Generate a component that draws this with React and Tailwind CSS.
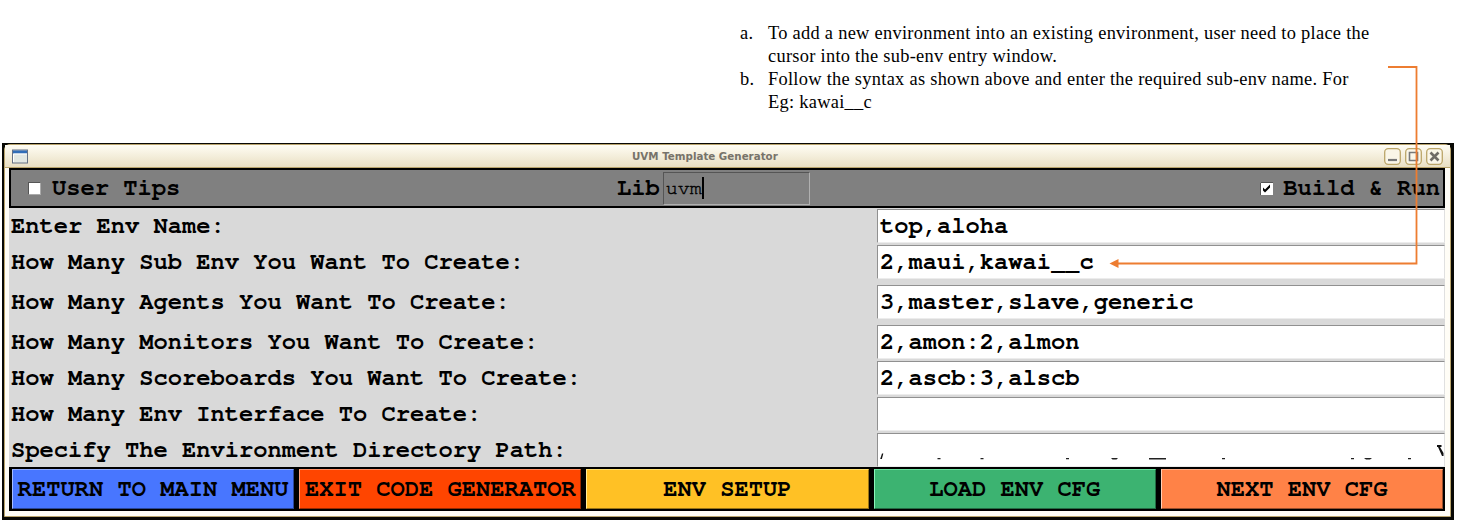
const mono = "font-['Courier_10_Pitch','Nimbus_Mono_PS','FreeMono','Liberation_Mono',monospace] font-bold text-[23.75px] leading-none whitespace-pre text-black pt-[2px]";

const rows = [
  { label: "Enter Env Name:", value: "top,aloha", h: "h-9" },
  { label: "How Many Sub Env You Want To Create:", value: "2,maui,kawai__c", h: "h-9" },
  { label: "How Many Agents You Want To Create:", value: "3,master,slave,generic", h: "h-11" },
  { label: "How Many Monitors You Want To Create:", value: "2,amon:2,almon", h: "h-9" },
  { label: "How Many Scoreboards You Want To Create:", value: "2,ascb:3,alscb", h: "h-9" },
  { label: "How Many Env Interface To Create:", value: "", h: "h-9" },
  { label: "Specify The Environment Directory Path:", value: null, h: "h-[35px]" },
];

const buttons = [
  { text: "RETURN TO MAIN MENU", color: "bg-[#4876ff] border-t-[#8fabff] border-l-[#a5bcff] border-r-[#2b4799] border-b-[#2b4799]" },
  { text: "EXIT CODE GENERATOR", color: "bg-[#ff4500] border-t-[#ff8d62] border-l-[#ffa27f] border-r-[#992900] border-b-[#992900]" },
  { text: "ENV SETUP", color: "bg-[#ffc125] border-t-[#ffe06e] border-l-[#ffed9b] border-r-[#997416] border-b-[#997416]" },
  { text: "LOAD ENV CFG", color: "bg-[#3cb371] border-t-[#69e29e] border-l-[#8af5b9] border-r-[#246b44] border-b-[#246b44]" },
  { text: "NEXT ENV CFG", color: "bg-[#ff8247] border-t-[#ffad87] border-l-[#ffd0b7] border-r-[#994e2b] border-b-[#994e2b]" },
];

function ClippedPath() {
  return (
    <svg width="566" height="32" viewBox="878 434 566 32" className="-ml-[2px] block shrink-0">
      <path d="M882 453.500h1.300l-1.400 5.500h-1.700z" fill="#111" />
      <path d="M937.500 458h3v1.300h-3zM980.500 458h3v1.300h-3zM1066 458h3v1.300h-3zM1111 458h7l-1.500 1.500h-4zM1149 458h17v1.500h-17zM1222 458h3v1.300h-3zM1351 458h3v1.300h-3zM1364 458h8l-2 1.500h-4zM1408 458h3v1.300h-3z" fill="#222" />
      <path d="M1437 445h4.500v2h-1.500l3.500 6v3h-1.500l-4-9h-1z" fill="#111" />
    </svg>
  );
}

function WindowButton({ children }) {
  return (
    <svg width="17" height="17" viewBox="0 0 17 17">
      <rect x=".7" y=".7" width="15.6" height="15.6" rx="3.5" fill="#faf6e8" stroke="#bba568" strokeWidth="1.3" />
      {children}
    </svg>
  );
}

export default function App() {
  return (
    <div className="relative flex h-[525px] w-[1458px] flex-col overflow-hidden bg-white">
      <div className="flex h-[143px] shrink-0 flex-col pl-[740px] pt-[22px] font-['Liberation_Serif',serif] text-[18.4px] leading-[23px] tracking-[0.28px] text-black">
        <div className="flex">
          <span className="w-7 shrink-0">a.</span>
          <div className="whitespace-pre">
            <div>To add a new environment into an existing environment, user need to place the</div>
            <div>cursor into the sub-env entry window.</div>
          </div>
        </div>
        <div className="flex">
          <span className="w-7 shrink-0">b.</span>
          <div className="whitespace-pre">
            <div>Follow the syntax as shown above and enter the required sub-env name. For</div>
            <div>Eg: kawai__c</div>
          </div>
        </div>
      </div>

      <div className="ml-[2px] h-[377px] w-[1452px] shrink-0 bg-[#080804] pb-[3px] pl-[2px] pr-[3px] pt-[1px]">
        <div className="flex h-full flex-col rounded-t-md border border-[#b9a46c] bg-[#fffdf6]">
          <div className="grid h-[22px] shrink-0 grid-cols-[620px_1fr_auto] items-center bg-linear-to-b from-[#fffdf4] to-[#e9dfc3] pl-[7px] pr-[7px]">
            <svg width="17" height="15" viewBox="0 0 17 15">
              <rect x=".5" y="1" width="15" height="13" fill="#e2e7e2" stroke="#667184" />
              <rect x="1" y="1.500" width="14" height="3" fill="#316db8" />
              <path d="M1.500 13V5H15" fill="none" stroke="#fff" />
            </svg>
            <span className="font-['DejaVu_Sans',sans-serif] text-[10.3px] font-bold leading-none text-[#77736a]">UVM Template Generator</span>
            <div className="flex gap-[4px]">
              <WindowButton><path d="M4 12h9" stroke="#777" strokeWidth="2.2" /></WindowButton>
              <WindowButton><path d="M4.500 4.500h8v8h-8z" fill="none" stroke="#777" strokeWidth="1.6" /></WindowButton>
              <WindowButton><path d="M4.500 4.500l8 8m0-8l-8 8" stroke="#706c66" strokeWidth="2.6" /></WindowButton>
            </div>
          </div>
          <div className="flex min-h-0 flex-1 flex-col border-t border-[#b9a46c] pl-[4px] pr-[5px]">
            <div className="flex h-10 shrink-0 items-center border-2 border-black bg-[#808080]">
              <div className="flex w-[606px] shrink-0 items-center pl-[17px]">
                <span className="size-[13px] border border-b-[#aaa] border-l-[#555] border-r-[#aaa] border-t-[#555] bg-white" />
                <span className={`ml-[11px] ${mono}`}>User Tips</span>
              </div>
              <span className={mono}>Lib</span>
              <div className="ml-[3px] flex h-[33px] w-[147px] items-center border border-b-[#b0b0b0] border-l-[#555] border-r-[#b0b0b0] border-t-[#555] pl-[2px]">
                <span className="font-['Courier_10_Pitch','Nimbus_Mono_PS','FreeMono','Liberation_Mono',monospace] text-[20px] leading-none text-black [-webkit-text-stroke:0.4px_black]">uvm</span>
                <span className="h-[22px] w-[2px] bg-black" />
              </div>
              <div className="ml-auto flex items-center pr-[3px]">
                <svg width="13" height="13" viewBox="0 0 13 13">
                  <path d="M0 0h13v13H0z" fill="#fff" />
                  <path d="M.5 13V.5H13" fill="none" stroke="#555" />
                  <path d="M3 5.500v3l2 2 5-5v-3l-5 5z" fill="#000" />
                </svg>
                <span className={`ml-[10px] ${mono}`}>Build &amp; Run</span>
              </div>
            </div>
            <div className="flex flex-col bg-[#d9d9d9]">
              {rows.map((r) => (
                <div key={r.label} className={`flex items-center ${r.h}`}>
                  <span className={`w-[868px] shrink-0 pl-[2px] ${mono}`}>{r.label}</span>
                  <div className="flex h-[34px] min-w-0 flex-1 items-center overflow-hidden border border-b-[#ececec] border-l-[#909090] border-r-[#e0e0e0] border-t-[#909090] bg-white pl-[2px]">
                    {r.value === null ? <ClippedPath /> : <span className={mono}>{r.value}</span>}
                  </div>
                </div>
              ))}
            </div>
            <div className="grid h-11 shrink-0 grid-cols-5 bg-black">
              {buttons.map((b) => (
                <div key={b.text} className="flex py-[2px] pl-[3px] pr-[2px]">
                  <div className={`flex flex-1 items-center justify-center border ${b.color}`}>
                    <span className={mono}>{b.text}</span>
                  </div>
                </div>
              ))}
            </div>
          </div>
        </div>
      </div>

      <svg className="pointer-events-none absolute left-0 top-0" width="1458" height="525" viewBox="0 0 1458 525">
        <path d="M1388 67h28.5v196.500H1118" fill="none" stroke="#ed7d31" strokeWidth="1.8" />
        <path d="M1109.500 263.500l9-4.500v9z" fill="#ed7d31" />
      </svg>
    </div>
  );
}
